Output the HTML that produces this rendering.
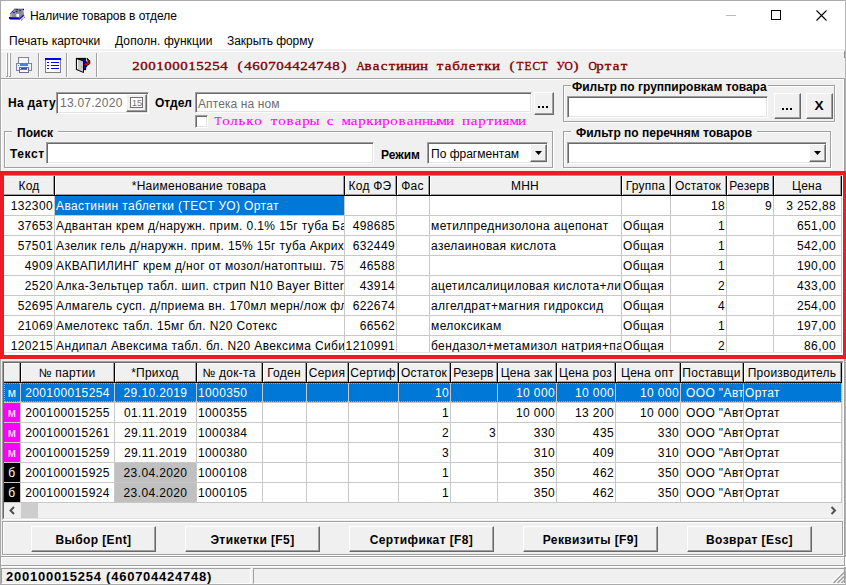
<!DOCTYPE html><html><head><meta charset="utf-8"><style>
*{margin:0;padding:0;box-sizing:border-box}
html,body{width:846px;height:585px;overflow:hidden;background:#f0f0f0;font-family:"Liberation Sans",sans-serif;font-size:12px;color:#000}
.abs{position:absolute}
.t{position:absolute;white-space:nowrap;line-height:1}
.b{font-weight:bold}
.sunk{position:absolute;background:#fff;border-top:1px solid #a0a0a0;border-left:1px solid #a0a0a0;border-right:1px solid #fff;border-bottom:1px solid #fff;box-shadow:inset 1px 1px 0 #696969, inset -1px -1px 0 #e3e3e3}
.btn{position:absolute;background:#f0f0f0;border-top:1px solid #fff;border-left:1px solid #fff;border-right:1px solid #696969;border-bottom:1px solid #696969;box-shadow:inset -1px -1px 0 #a0a0a0}
.grp{position:absolute;border-top:1px solid #a0a0a0;border-left:1px solid #a0a0a0;border-right:1px solid #fff;border-bottom:1px solid #fff;box-shadow:inset 1px 1px 0 #fff, inset -1px -1px 0 #a0a0a0}
.cap{position:absolute;background:#f0f0f0;padding:0 2px;font-weight:bold;white-space:nowrap;line-height:1}
.hl{position:absolute;height:1px}
.vl{position:absolute;width:1px}
.mono{font-family:"Liberation Serif",serif;font-size:13px;-webkit-text-stroke:0.35px currentColor}
.mono i{font-style:normal;display:inline-block;width:8px;text-align:center;transform:scaleX(1.15)}
.mono i.u{transform:scaleX(0.88)}
</style></head><body>
<div class="abs" style="left:1px;top:1px;width:844px;height:48px;background:#fff"></div>
<div class="abs" style="left:0;top:0;width:846px;height:1px;background:#aaa"></div>
<div class="abs" style="left:0;top:0;width:1px;height:585px;background:#aaa"></div>
<div class="abs" style="left:845px;top:0;width:1px;height:585px;background:#b4b4b4"></div>
<svg class="abs" style="left:6px;top:4px" width="22" height="22" viewBox="0 0 22 22">
<path d="M8.5 5 L17.5 5.2 L18 12 L14 15.5 L4 15 L4 9.5 Z" fill="#8e8e8e"/>
<path d="M4.5 9.5 L8.5 5 L17.5 5.2" stroke="#000" stroke-width="0.9" stroke-dasharray="1.1 0.9" fill="none"/>
<rect x="4.5" y="10" width="1" height="3.5" fill="#d0d0d0"/>
<path d="M10.3 10 L13 10 L13 12.8 L10.3 12.8 Z" fill="#fff"/>
<path d="M9.5 11.5 L10.5 10.8 L10.5 12.5 Z" fill="#c0c0c0"/>
<path d="M3 13.2 L12.5 13.5 L14 15.6 L4 15.6 Z" fill="#0000b0"/>
<path d="M3 13 L4.2 13 L4.2 15 L3 14.5 Z" fill="#000"/>
<path d="M13.5 14.8 L18 11" stroke="#2020d0" stroke-width="1.6"/>
<path d="M15 16.5 L19 12.8" stroke="#000" stroke-width="1" stroke-dasharray="1 1"/>
<ellipse cx="11" cy="5.6" rx="1.1" ry="0.6" fill="#0000e0"/>
<ellipse cx="14" cy="6.6" rx="1.1" ry="0.6" fill="#0000e0"/>
<ellipse cx="10.6" cy="7.6" rx="1.1" ry="0.6" fill="#0000e0"/>
<ellipse cx="7.8" cy="8.5" rx="1.1" ry="0.6" fill="#0000e0"/>
<circle cx="17.4" cy="5.4" r="0.6" fill="#000"/>
</svg>
<div class="t" style="left:30px;top:10px;letter-spacing:-0.06px">Наличие товаров в отделе</div>
<div class="abs" style="left:726px;top:15px;width:10px;height:1px;background:#bbb"></div>
<div class="abs" style="left:771px;top:10px;width:10px;height:10px;border:1px solid #000"></div>
<svg class="abs" style="left:816px;top:10px" width="11" height="11" viewBox="0 0 11 11"><path d="M0.5 0.5 L10.5 10.5 M10.5 0.5 L0.5 10.5" stroke="#000" stroke-width="1.1"/></svg>
<div class="t" style="left:9px;top:35px">Печать карточки</div>
<div class="t" style="left:115px;top:35px;letter-spacing:0.1px">Дополн. функции</div>
<div class="t" style="left:227px;top:35px;letter-spacing:-0.05px">Закрыть форму</div>
<div class="abs" style="left:1px;top:51px;width:844px;height:1px;background:#fff"></div>
<div class="abs" style="left:1px;top:78px;width:844px;height:1px;background:#a0a0a0"></div>
<div class="abs" style="left:1px;top:79px;width:844px;height:1px;background:#fff"></div>
<div class="abs" style="left:844px;top:51px;width:1px;height:7px;background:#909090"></div>
<div class="abs" style="left:6px;top:53px;width:1px;height:23px;background:#fff"></div>
<div class="abs" style="left:7px;top:53px;width:1px;height:24px;background:#a0a0a0"></div>
<div class="abs" style="left:6px;top:76px;width:1px;height:1px;background:#a0a0a0"></div>
<div class="abs" style="left:9px;top:53px;width:1px;height:23px;background:#fff"></div>
<div class="abs" style="left:10px;top:53px;width:1px;height:24px;background:#a0a0a0"></div>
<div class="abs" style="left:9px;top:76px;width:1px;height:1px;background:#a0a0a0"></div>
<div class="abs" style="left:38px;top:53px;width:1px;height:24px;background:#a0a0a0"></div>
<div class="abs" style="left:39px;top:53px;width:1px;height:24px;background:#fff"></div>
<div class="abs" style="left:66px;top:53px;width:1px;height:24px;background:#a0a0a0"></div>
<div class="abs" style="left:67px;top:53px;width:1px;height:24px;background:#fff"></div>
<div class="abs" style="left:96px;top:53px;width:1px;height:24px;background:#a0a0a0"></div>
<div class="abs" style="left:97px;top:53px;width:1px;height:24px;background:#fff"></div>
<svg class="abs" style="left:12px;top:54px" width="22" height="22" viewBox="0 0 22 22" shape-rendering="crispEdges">
<rect x="6.5" y="3.5" width="10" height="6" fill="#f4f8ff" stroke="#8080a8"/>
<rect x="4.5" y="9.5" width="15" height="7" fill="#f0f2fa" stroke="#8080a8"/>
<rect x="8" y="9" width="8" height="3" fill="#2a8cf0"/>
<rect x="6" y="11" width="1" height="1" fill="#40b040"/>
<rect x="7.5" y="13.5" width="9" height="5" fill="#f8f8ff" stroke="#6a6a90"/>
<rect x="9" y="14" width="6" height="1" fill="#3050c0"/>
<rect x="8" y="15" width="7" height="1" fill="#30a050"/>
</svg>
<svg class="abs" style="left:45px;top:58px" width="16" height="15" viewBox="0 0 16 15" shape-rendering="crispEdges">
<rect x="0.5" y="0.5" width="15" height="14" fill="#fff" stroke="#808080"/>
<rect x="0" y="0" width="16" height="2" fill="#0000f0"/>
<rect x="2" y="4" width="2" height="1" fill="#0000f0"/><rect x="6" y="4" width="8" height="1" fill="#0000f0"/>
<rect x="2" y="7" width="2" height="1" fill="#0000f0"/><rect x="6" y="7" width="8" height="1" fill="#0000f0"/>
<rect x="2" y="10" width="2" height="1" fill="#0000f0"/><rect x="6" y="10" width="8" height="1" fill="#0000f0"/>
</svg>
<svg class="abs" style="left:72px;top:54px" width="22" height="22" viewBox="0 0 22 22">
<rect x="4.5" y="4.5" width="9" height="11" fill="#0000f0" stroke="#000" stroke-width="1.2"/>
<path d="M4.5 4.5 L11.5 7 L11.5 18.5 L4.5 15.5 Z" fill="#c8c8c8" stroke="#000" stroke-width="1"/>
<path d="M5.5 6 L5.5 15" stroke="#fff" stroke-width="1"/>
<rect x="9" y="12" width="1.5" height="1.5" fill="#c0c000"/>
<path d="M15 4.2 L17.8 6.8 L17.8 9.6 L15.8 11.2 L14.6 11.2 L14.6 13 L11.6 10.3 L14.6 7.6 L14.6 9.2 L15.4 9.2 L16.2 8 L15.8 6.4 Z" fill="#f00000" stroke="#000" stroke-width="0.9" stroke-linejoin="round"/>
</svg>
<div class="t mono" style="left:132px;top:59px;color:#800000"><i>2</i><i>0</i><i>0</i><i>1</i><i>0</i><i>0</i><i>0</i><i>1</i><i>5</i><i>2</i><i>5</i><i>4</i><i>&nbsp;</i><i>(</i><i>4</i><i>6</i><i>0</i><i>7</i><i>0</i><i>4</i><i>4</i><i>2</i><i>4</i><i>7</i><i>4</i><i>8</i><i>)</i><i>&nbsp;</i><i class="u">А</i><i>в</i><i>а</i><i>с</i><i>т</i><i>и</i><i>н</i><i>и</i><i>н</i><i>&nbsp;</i><i>т</i><i>а</i><i>б</i><i>л</i><i>е</i><i>т</i><i>к</i><i>и</i><i>&nbsp;</i><i>(</i><i class="u">Т</i><i class="u">Е</i><i class="u">С</i><i class="u">Т</i><i>&nbsp;</i><i class="u">У</i><i class="u">О</i><i>)</i><i>&nbsp;</i><i class="u">О</i><i>р</i><i>т</i><i>а</i><i>т</i></div>
<div class="t b" style="left:8px;top:97px;letter-spacing:0.3px">На дату</div>
<div class="sunk" style="left:56px;top:92px;width:93px;height:22px"></div>
<div class="t" style="left:60px;top:97px;color:#6d6d6d;letter-spacing:0.25px">13.07.2020</div>
<div class="btn" style="left:126px;top:94px;width:21px;height:18px"></div>
<div class="abs" style="left:130px;top:97px;width:13px;height:11px;border:1px solid #707070;background:#fff"></div>
<div class="t" style="left:132px;top:99px;font-size:9px;color:#707070">15</div>
<div class="t b" style="left:155px;top:97px">Отдел</div>
<div class="sunk" style="left:195px;top:92px;width:337px;height:21px"></div>
<div class="t" style="left:198px;top:98px;color:#6d6d6d;letter-spacing:0.1px">Аптека на ном</div>
<div class="btn" style="left:534px;top:92px;width:20px;height:23px"></div>
<div class="abs" style="left:538px;top:106px;width:2px;height:2px;background:#000"></div><div class="abs" style="left:542px;top:106px;width:2px;height:2px;background:#000"></div><div class="abs" style="left:546px;top:106px;width:2px;height:2px;background:#000"></div>
<div class="sunk" style="left:195px;top:115px;width:13px;height:13px"></div>
<div class="t mono" style="left:214px;top:114px;color:#ff00ff;-webkit-text-stroke:0.1px #ff00ff"><i class="u">Т</i><i>о</i><i>л</i><i>ь</i><i>к</i><i>о</i><i>&nbsp;</i><i>т</i><i>о</i><i>в</i><i>а</i><i>р</i><i>ы</i><i>&nbsp;</i><i>с</i><i>&nbsp;</i><i>м</i><i>а</i><i>р</i><i>к</i><i>и</i><i>р</i><i>о</i><i>в</i><i>а</i><i>н</i><i>н</i><i>ы</i><i>м</i><i>и</i><i>&nbsp;</i><i>п</i><i>а</i><i>р</i><i>т</i><i>и</i><i>я</i><i>м</i><i>и</i></div>
<div class="abs" style="left:5px;top:132px;width:549px;height:37px;border:1px solid #fff"></div>
<div class="abs" style="left:4px;top:131px;width:549px;height:37px;border:1px solid #a0a0a0"></div>
<div class="cap" style="left:12px;top:127px;padding:0 5px 0 5px">Поиск</div>
<div class="t b" style="left:10px;top:148px;letter-spacing:0.6px">Текст</div>
<div class="sunk" style="left:46px;top:142px;width:328px;height:22px"></div>
<div class="t b" style="left:381px;top:149px">Режим</div>
<div class="sunk" style="left:427px;top:142px;width:121px;height:22px"></div>
<div class="t" style="left:431px;top:148px">По фрагментам</div>
<div class="btn" style="left:530px;top:144px;width:17px;height:18px"></div>
<svg class="abs" style="left:535px;top:151px" width="8" height="4"><path d="M0 0 L7 0 L3.5 4 Z" fill="#000"/></svg>
<div class="abs" style="left:564px;top:86px;width:272px;height:37px;border:1px solid #fff"></div>
<div class="abs" style="left:563px;top:85px;width:272px;height:37px;border:1px solid #a0a0a0"></div>
<div class="cap" style="left:571px;top:81px;padding:0 1px">Фильтр по группировкам товара</div>
<div class="sunk" style="left:567px;top:96px;width:201px;height:22px"></div>
<div class="btn" style="left:774px;top:93px;width:27px;height:26px"></div>
<div class="abs" style="left:782px;top:108px;width:2px;height:2px;background:#000"></div><div class="abs" style="left:786px;top:108px;width:2px;height:2px;background:#000"></div><div class="abs" style="left:790px;top:108px;width:2px;height:2px;background:#000"></div>
<div class="btn" style="left:806px;top:93px;width:27px;height:26px"></div>
<div class="t b" style="left:814.5px;top:99px;font-size:13.6px">X</div>
<div class="abs" style="left:564px;top:132px;width:268px;height:37px;border:1px solid #fff"></div>
<div class="abs" style="left:563px;top:131px;width:268px;height:37px;border:1px solid #a0a0a0"></div>
<div class="cap" style="left:571px;top:127px;padding:0 5px 0 5px">Фильтр по перечням товаров</div>
<div class="sunk" style="left:567px;top:142px;width:260px;height:22px"></div>
<div class="btn" style="left:809px;top:144px;width:17px;height:18px"></div>
<svg class="abs" style="left:814px;top:151px" width="8" height="4"><path d="M0 0 L7 0 L3.5 4 Z" fill="#000"/></svg>
<div class="abs" style="left:844px;top:78px;width:1px;height:506px;background:#a0a0a0"></div>
<div class="abs" style="left:843px;top:79px;width:1px;height:92px;background:#fff"></div>
<div class="abs" style="left:1px;top:79px;width:1px;height:92px;background:#fff"></div>
<div class="abs" style="left:0;top:171px;width:846px;height:4px;background:#ed1c24"></div>
<div class="abs" style="left:0;top:355px;width:846px;height:4px;background:#ed1c24"></div>
<div class="abs" style="left:0;top:171px;width:4px;height:188px;background:#ed1c24"></div>
<div class="abs" style="left:843px;top:171px;width:3px;height:188px;background:#ed1c24"></div>
<div class="abs" style="left:4px;top:175px;width:839px;height:180px;background:#fff;overflow:hidden">
<div class="abs" style="left:0;top:0;width:838px;height:1px;background:#a0a0a0"></div>
<div class="abs" style="left:0;top:1px;width:838px;height:19px;background:#f0f0f0"></div>
<div class="abs" style="left:0;top:1px;width:838px;height:1px;background:#fff"></div>
<div class="abs" style="left:0;top:19px;width:838px;height:1px;background:#a0a0a0"></div>
<div class="abs" style="left:0;top:20px;width:838px;height:1px;background:#000"></div>
<div class="t" style="left:0px;width:50px;top:5px;text-align:center;letter-spacing:0.25px">Код</div>
<div class="abs" style="left:50px;top:1px;width:1px;height:19px;background:#000"></div>
<div class="abs" style="left:51px;top:1px;width:1px;height:19px;background:#fff"></div>
<div class="abs" style="left:49px;top:1px;width:1px;height:19px;background:#a0a0a0"></div>
<div class="t" style="left:50px;width:290px;top:5px;text-align:center;letter-spacing:0.25px">*Наименование товара</div>
<div class="abs" style="left:340px;top:1px;width:1px;height:19px;background:#000"></div>
<div class="abs" style="left:341px;top:1px;width:1px;height:19px;background:#fff"></div>
<div class="abs" style="left:339px;top:1px;width:1px;height:19px;background:#a0a0a0"></div>
<div class="t" style="left:340px;width:52px;top:5px;text-align:center;letter-spacing:0.25px">Код ФЭ</div>
<div class="abs" style="left:392px;top:1px;width:1px;height:19px;background:#000"></div>
<div class="abs" style="left:393px;top:1px;width:1px;height:19px;background:#fff"></div>
<div class="abs" style="left:391px;top:1px;width:1px;height:19px;background:#a0a0a0"></div>
<div class="t" style="left:392px;width:33px;top:5px;text-align:center;letter-spacing:0.25px">Фас</div>
<div class="abs" style="left:425px;top:1px;width:1px;height:19px;background:#000"></div>
<div class="abs" style="left:426px;top:1px;width:1px;height:19px;background:#fff"></div>
<div class="abs" style="left:424px;top:1px;width:1px;height:19px;background:#a0a0a0"></div>
<div class="t" style="left:425px;width:192px;top:5px;text-align:center;letter-spacing:0.25px">МНН</div>
<div class="abs" style="left:617px;top:1px;width:1px;height:19px;background:#000"></div>
<div class="abs" style="left:618px;top:1px;width:1px;height:19px;background:#fff"></div>
<div class="abs" style="left:616px;top:1px;width:1px;height:19px;background:#a0a0a0"></div>
<div class="t" style="left:617px;width:49px;top:5px;text-align:center;letter-spacing:0.25px">Группа</div>
<div class="abs" style="left:666px;top:1px;width:1px;height:19px;background:#000"></div>
<div class="abs" style="left:667px;top:1px;width:1px;height:19px;background:#fff"></div>
<div class="abs" style="left:665px;top:1px;width:1px;height:19px;background:#a0a0a0"></div>
<div class="t" style="left:666px;width:56px;top:5px;text-align:center;letter-spacing:0.25px">Остаток</div>
<div class="abs" style="left:722px;top:1px;width:1px;height:19px;background:#000"></div>
<div class="abs" style="left:723px;top:1px;width:1px;height:19px;background:#fff"></div>
<div class="abs" style="left:721px;top:1px;width:1px;height:19px;background:#a0a0a0"></div>
<div class="t" style="left:722px;width:47px;top:5px;text-align:center;letter-spacing:0.25px">Резерв</div>
<div class="abs" style="left:769px;top:1px;width:1px;height:19px;background:#000"></div>
<div class="abs" style="left:770px;top:1px;width:1px;height:19px;background:#fff"></div>
<div class="abs" style="left:768px;top:1px;width:1px;height:19px;background:#a0a0a0"></div>
<div class="t" style="left:769px;width:68px;top:5px;text-align:center;letter-spacing:0.25px">Цена</div>
<div class="abs" style="left:837px;top:1px;width:1px;height:20px;background:#000"></div>
<div class="abs" style="left:836px;top:1px;width:1px;height:19px;background:#a0a0a0"></div>
<div class="abs" style="left:0;top:40px;width:838px;height:1px;background:#c8c8c8"></div>
<div class="t" style="left:0px;top:21px;width:50px;height:19px;line-height:21px;overflow:hidden;color:#000;text-align:right;padding-right:1px;letter-spacing:0.38px">132300</div>
<div class="t" style="left:51px;top:21px;width:289px;height:19px;line-height:21px;overflow:hidden;background:#0078d7;color:#fff;padding-left:1px;letter-spacing:0.38px">Авастинин таблетки (ТЕСТ УО) Ортат</div>
<div class="t" style="left:341px;top:21px;width:51px;height:19px;line-height:21px;overflow:hidden;color:#000;text-align:right;padding-right:1px;letter-spacing:0.38px"></div>
<div class="t" style="left:393px;top:21px;width:32px;height:19px;line-height:21px;overflow:hidden;color:#000;padding-left:1px;letter-spacing:0.38px"></div>
<div class="t" style="left:426px;top:21px;width:191px;height:19px;line-height:21px;overflow:hidden;color:#000;padding-left:1px;letter-spacing:0.38px"></div>
<div class="t" style="left:618px;top:21px;width:48px;height:19px;line-height:21px;overflow:hidden;color:#000;padding-left:1px;letter-spacing:0.38px"></div>
<div class="t" style="left:667px;top:21px;width:55px;height:19px;line-height:21px;overflow:hidden;color:#000;text-align:right;padding-right:1px;letter-spacing:0.38px">18</div>
<div class="t" style="left:723px;top:21px;width:46px;height:19px;line-height:21px;overflow:hidden;color:#000;text-align:right;padding-right:1px;letter-spacing:0.38px">9</div>
<div class="t" style="left:770px;top:21px;width:67px;height:19px;line-height:21px;overflow:hidden;color:#000;text-align:right;padding-right:5px;letter-spacing:0.38px">3 252,88</div>
<div class="abs" style="left:0;top:60px;width:838px;height:1px;background:#c8c8c8"></div>
<div class="t" style="left:0px;top:41px;width:50px;height:19px;line-height:21px;overflow:hidden;color:#000;text-align:right;padding-right:1px;letter-spacing:0.38px">37653</div>
<div class="t" style="left:51px;top:41px;width:289px;height:19px;line-height:21px;overflow:hidden;color:#000;padding-left:1px;letter-spacing:0.38px">Адвантан крем д/наружн. прим. 0.1% 15г туба Байер</div>
<div class="t" style="left:341px;top:41px;width:51px;height:19px;line-height:21px;overflow:hidden;color:#000;text-align:right;padding-right:1px;letter-spacing:0.38px">498685</div>
<div class="t" style="left:393px;top:41px;width:32px;height:19px;line-height:21px;overflow:hidden;color:#000;padding-left:1px;letter-spacing:0.38px"></div>
<div class="t" style="left:426px;top:41px;width:191px;height:19px;line-height:21px;overflow:hidden;color:#000;padding-left:1px;letter-spacing:0.38px">метилпреднизолона ацепонат</div>
<div class="t" style="left:618px;top:41px;width:48px;height:19px;line-height:21px;overflow:hidden;color:#000;padding-left:1px;letter-spacing:0.38px">Общая</div>
<div class="t" style="left:667px;top:41px;width:55px;height:19px;line-height:21px;overflow:hidden;color:#000;text-align:right;padding-right:1px;letter-spacing:0.38px">1</div>
<div class="t" style="left:723px;top:41px;width:46px;height:19px;line-height:21px;overflow:hidden;color:#000;text-align:right;padding-right:1px;letter-spacing:0.38px"></div>
<div class="t" style="left:770px;top:41px;width:67px;height:19px;line-height:21px;overflow:hidden;color:#000;text-align:right;padding-right:5px;letter-spacing:0.38px">651,00</div>
<div class="abs" style="left:0;top:80px;width:838px;height:1px;background:#c8c8c8"></div>
<div class="t" style="left:0px;top:61px;width:50px;height:19px;line-height:21px;overflow:hidden;color:#000;text-align:right;padding-right:1px;letter-spacing:0.38px">57501</div>
<div class="t" style="left:51px;top:61px;width:289px;height:19px;line-height:21px;overflow:hidden;color:#000;padding-left:1px;letter-spacing:0.38px">Азелик гель д/наружн. прим. 15% 15г туба Акрихин</div>
<div class="t" style="left:341px;top:61px;width:51px;height:19px;line-height:21px;overflow:hidden;color:#000;text-align:right;padding-right:1px;letter-spacing:0.38px">632449</div>
<div class="t" style="left:393px;top:61px;width:32px;height:19px;line-height:21px;overflow:hidden;color:#000;padding-left:1px;letter-spacing:0.38px"></div>
<div class="t" style="left:426px;top:61px;width:191px;height:19px;line-height:21px;overflow:hidden;color:#000;padding-left:1px;letter-spacing:0.38px">азелаиновая кислота</div>
<div class="t" style="left:618px;top:61px;width:48px;height:19px;line-height:21px;overflow:hidden;color:#000;padding-left:1px;letter-spacing:0.38px">Общая</div>
<div class="t" style="left:667px;top:61px;width:55px;height:19px;line-height:21px;overflow:hidden;color:#000;text-align:right;padding-right:1px;letter-spacing:0.38px">1</div>
<div class="t" style="left:723px;top:61px;width:46px;height:19px;line-height:21px;overflow:hidden;color:#000;text-align:right;padding-right:1px;letter-spacing:0.38px"></div>
<div class="t" style="left:770px;top:61px;width:67px;height:19px;line-height:21px;overflow:hidden;color:#000;text-align:right;padding-right:5px;letter-spacing:0.38px">542,00</div>
<div class="abs" style="left:0;top:100px;width:838px;height:1px;background:#c8c8c8"></div>
<div class="t" style="left:0px;top:81px;width:50px;height:19px;line-height:21px;overflow:hidden;color:#000;text-align:right;padding-right:1px;letter-spacing:0.38px">4909</div>
<div class="t" style="left:51px;top:81px;width:289px;height:19px;line-height:21px;overflow:hidden;color:#000;padding-left:1px;letter-spacing:0.38px">АКВАПИЛИНГ крем д/ног от мозол/натоптыш. 75мл</div>
<div class="t" style="left:341px;top:81px;width:51px;height:19px;line-height:21px;overflow:hidden;color:#000;text-align:right;padding-right:1px;letter-spacing:0.38px">46588</div>
<div class="t" style="left:393px;top:81px;width:32px;height:19px;line-height:21px;overflow:hidden;color:#000;padding-left:1px;letter-spacing:0.38px"></div>
<div class="t" style="left:426px;top:81px;width:191px;height:19px;line-height:21px;overflow:hidden;color:#000;padding-left:1px;letter-spacing:0.38px"></div>
<div class="t" style="left:618px;top:81px;width:48px;height:19px;line-height:21px;overflow:hidden;color:#000;padding-left:1px;letter-spacing:0.38px">Общая</div>
<div class="t" style="left:667px;top:81px;width:55px;height:19px;line-height:21px;overflow:hidden;color:#000;text-align:right;padding-right:1px;letter-spacing:0.38px">1</div>
<div class="t" style="left:723px;top:81px;width:46px;height:19px;line-height:21px;overflow:hidden;color:#000;text-align:right;padding-right:1px;letter-spacing:0.38px"></div>
<div class="t" style="left:770px;top:81px;width:67px;height:19px;line-height:21px;overflow:hidden;color:#000;text-align:right;padding-right:5px;letter-spacing:0.38px">190,00</div>
<div class="abs" style="left:0;top:120px;width:838px;height:1px;background:#c8c8c8"></div>
<div class="t" style="left:0px;top:101px;width:50px;height:19px;line-height:21px;overflow:hidden;color:#000;text-align:right;padding-right:1px;letter-spacing:0.38px">2520</div>
<div class="t" style="left:51px;top:101px;width:289px;height:19px;line-height:21px;overflow:hidden;color:#000;padding-left:1px;letter-spacing:0.38px">Алка-Зельтцер табл. шип. стрип N10 Bayer Bitterfeld</div>
<div class="t" style="left:341px;top:101px;width:51px;height:19px;line-height:21px;overflow:hidden;color:#000;text-align:right;padding-right:1px;letter-spacing:0.38px">43914</div>
<div class="t" style="left:393px;top:101px;width:32px;height:19px;line-height:21px;overflow:hidden;color:#000;padding-left:1px;letter-spacing:0.38px"></div>
<div class="t" style="left:426px;top:101px;width:191px;height:19px;line-height:21px;overflow:hidden;color:#000;padding-left:1px;letter-spacing:0.38px">ацетилсалициловая кислота+лимонная</div>
<div class="t" style="left:618px;top:101px;width:48px;height:19px;line-height:21px;overflow:hidden;color:#000;padding-left:1px;letter-spacing:0.38px">Общая</div>
<div class="t" style="left:667px;top:101px;width:55px;height:19px;line-height:21px;overflow:hidden;color:#000;text-align:right;padding-right:1px;letter-spacing:0.38px">2</div>
<div class="t" style="left:723px;top:101px;width:46px;height:19px;line-height:21px;overflow:hidden;color:#000;text-align:right;padding-right:1px;letter-spacing:0.38px"></div>
<div class="t" style="left:770px;top:101px;width:67px;height:19px;line-height:21px;overflow:hidden;color:#000;text-align:right;padding-right:5px;letter-spacing:0.38px">433,00</div>
<div class="abs" style="left:0;top:140px;width:838px;height:1px;background:#c8c8c8"></div>
<div class="t" style="left:0px;top:121px;width:50px;height:19px;line-height:21px;overflow:hidden;color:#000;text-align:right;padding-right:1px;letter-spacing:0.38px">52695</div>
<div class="t" style="left:51px;top:121px;width:289px;height:19px;line-height:21px;overflow:hidden;color:#000;padding-left:1px;letter-spacing:0.38px">Алмагель сусп. д/приема вн. 170мл мерн/лож фл.</div>
<div class="t" style="left:341px;top:121px;width:51px;height:19px;line-height:21px;overflow:hidden;color:#000;text-align:right;padding-right:1px;letter-spacing:0.38px">622674</div>
<div class="t" style="left:393px;top:121px;width:32px;height:19px;line-height:21px;overflow:hidden;color:#000;padding-left:1px;letter-spacing:0.38px"></div>
<div class="t" style="left:426px;top:121px;width:191px;height:19px;line-height:21px;overflow:hidden;color:#000;padding-left:1px;letter-spacing:0.38px">алгелдрат+магния гидроксид</div>
<div class="t" style="left:618px;top:121px;width:48px;height:19px;line-height:21px;overflow:hidden;color:#000;padding-left:1px;letter-spacing:0.38px">Общая</div>
<div class="t" style="left:667px;top:121px;width:55px;height:19px;line-height:21px;overflow:hidden;color:#000;text-align:right;padding-right:1px;letter-spacing:0.38px">4</div>
<div class="t" style="left:723px;top:121px;width:46px;height:19px;line-height:21px;overflow:hidden;color:#000;text-align:right;padding-right:1px;letter-spacing:0.38px"></div>
<div class="t" style="left:770px;top:121px;width:67px;height:19px;line-height:21px;overflow:hidden;color:#000;text-align:right;padding-right:5px;letter-spacing:0.38px">254,00</div>
<div class="abs" style="left:0;top:160px;width:838px;height:1px;background:#c8c8c8"></div>
<div class="t" style="left:0px;top:141px;width:50px;height:19px;line-height:21px;overflow:hidden;color:#000;text-align:right;padding-right:1px;letter-spacing:0.38px">21069</div>
<div class="t" style="left:51px;top:141px;width:289px;height:19px;line-height:21px;overflow:hidden;color:#000;padding-left:1px;letter-spacing:0.38px">Амелотекс табл. 15мг бл. N20 Сотекс</div>
<div class="t" style="left:341px;top:141px;width:51px;height:19px;line-height:21px;overflow:hidden;color:#000;text-align:right;padding-right:1px;letter-spacing:0.38px">66562</div>
<div class="t" style="left:393px;top:141px;width:32px;height:19px;line-height:21px;overflow:hidden;color:#000;padding-left:1px;letter-spacing:0.38px"></div>
<div class="t" style="left:426px;top:141px;width:191px;height:19px;line-height:21px;overflow:hidden;color:#000;padding-left:1px;letter-spacing:0.38px">мелоксикам</div>
<div class="t" style="left:618px;top:141px;width:48px;height:19px;line-height:21px;overflow:hidden;color:#000;padding-left:1px;letter-spacing:0.38px">Общая</div>
<div class="t" style="left:667px;top:141px;width:55px;height:19px;line-height:21px;overflow:hidden;color:#000;text-align:right;padding-right:1px;letter-spacing:0.38px">1</div>
<div class="t" style="left:723px;top:141px;width:46px;height:19px;line-height:21px;overflow:hidden;color:#000;text-align:right;padding-right:1px;letter-spacing:0.38px"></div>
<div class="t" style="left:770px;top:141px;width:67px;height:19px;line-height:21px;overflow:hidden;color:#000;text-align:right;padding-right:5px;letter-spacing:0.38px">197,00</div>
<div class="abs" style="left:0;top:180px;width:838px;height:1px;background:#c8c8c8"></div>
<div class="t" style="left:0px;top:161px;width:50px;height:19px;line-height:21px;overflow:hidden;color:#000;text-align:right;padding-right:1px;letter-spacing:0.38px">120215</div>
<div class="t" style="left:51px;top:161px;width:289px;height:19px;line-height:21px;overflow:hidden;color:#000;padding-left:1px;letter-spacing:0.38px">Андипал Авексима табл. бл. N20 Авексима Сибирь</div>
<div class="t" style="left:341px;top:161px;width:51px;height:19px;line-height:21px;overflow:hidden;color:#000;text-align:right;padding-right:1px;letter-spacing:0.38px">1210991</div>
<div class="t" style="left:393px;top:161px;width:32px;height:19px;line-height:21px;overflow:hidden;color:#000;padding-left:1px;letter-spacing:0.38px"></div>
<div class="t" style="left:426px;top:161px;width:191px;height:19px;line-height:21px;overflow:hidden;color:#000;padding-left:1px;letter-spacing:0.38px">бендазол+метамизол натрия+парацетамол</div>
<div class="t" style="left:618px;top:161px;width:48px;height:19px;line-height:21px;overflow:hidden;color:#000;padding-left:1px;letter-spacing:0.38px">Общая</div>
<div class="t" style="left:667px;top:161px;width:55px;height:19px;line-height:21px;overflow:hidden;color:#000;text-align:right;padding-right:1px;letter-spacing:0.38px">2</div>
<div class="t" style="left:723px;top:161px;width:46px;height:19px;line-height:21px;overflow:hidden;color:#000;text-align:right;padding-right:1px;letter-spacing:0.38px"></div>
<div class="t" style="left:770px;top:161px;width:67px;height:19px;line-height:21px;overflow:hidden;color:#000;text-align:right;padding-right:5px;letter-spacing:0.38px">86,00</div>
<div class="abs" style="left:50px;top:21px;width:1px;height:156px;background:#c8c8c8"></div>
<div class="abs" style="left:340px;top:21px;width:1px;height:156px;background:#c8c8c8"></div>
<div class="abs" style="left:392px;top:21px;width:1px;height:156px;background:#c8c8c8"></div>
<div class="abs" style="left:425px;top:21px;width:1px;height:156px;background:#c8c8c8"></div>
<div class="abs" style="left:617px;top:21px;width:1px;height:156px;background:#c8c8c8"></div>
<div class="abs" style="left:666px;top:21px;width:1px;height:156px;background:#c8c8c8"></div>
<div class="abs" style="left:722px;top:21px;width:1px;height:156px;background:#c8c8c8"></div>
<div class="abs" style="left:769px;top:21px;width:1px;height:156px;background:#c8c8c8"></div>
<div class="abs" style="left:837px;top:21px;width:1px;height:156px;background:#c8c8c8"></div>
<div class="abs" style="left:0;top:177px;width:838px;height:1px;background:#e3e3e3"></div>
</div>
<div class="abs" style="left:2px;top:361px;width:842px;height:159px;border-top:1px solid #a0a0a0;border-left:1px solid #a0a0a0;border-right:1px solid #fff;border-bottom:1px solid #fff"></div>
<div class="abs" style="left:3px;top:362px;width:840px;height:157px;border-top:1px solid #696969;border-left:1px solid #696969;border-right:1px solid #e3e3e3;border-bottom:1px solid #e3e3e3;background:#fff;overflow:hidden">
<div class="abs" style="left:0;top:0;width:838px;height:19px;background:#f0f0f0"></div>
<div class="abs" style="left:0;top:0;width:838px;height:1px;background:#fff"></div>
<div class="abs" style="left:0;top:18px;width:838px;height:1px;background:#a0a0a0"></div>
<div class="abs" style="left:0;top:19px;width:838px;height:1px;background:#000"></div>
<div class="t" style="left:0px;width:16px;top:4px;text-align:center;letter-spacing:0.25px"></div>
<div class="abs" style="left:16px;top:0;width:1px;height:19px;background:#000"></div>
<div class="abs" style="left:17px;top:0;width:1px;height:19px;background:#fff"></div>
<div class="abs" style="left:15px;top:0;width:1px;height:19px;background:#a0a0a0"></div>
<div class="t" style="left:16px;width:94px;top:4px;text-align:center;letter-spacing:0.25px">№ партии</div>
<div class="abs" style="left:110px;top:0;width:1px;height:19px;background:#000"></div>
<div class="abs" style="left:111px;top:0;width:1px;height:19px;background:#fff"></div>
<div class="abs" style="left:109px;top:0;width:1px;height:19px;background:#a0a0a0"></div>
<div class="t" style="left:110px;width:82px;top:4px;text-align:center;letter-spacing:0.25px">*Приход</div>
<div class="abs" style="left:192px;top:0;width:1px;height:19px;background:#000"></div>
<div class="abs" style="left:193px;top:0;width:1px;height:19px;background:#fff"></div>
<div class="abs" style="left:191px;top:0;width:1px;height:19px;background:#a0a0a0"></div>
<div class="t" style="left:192px;width:66px;top:4px;text-align:center;letter-spacing:0.25px">№ док-та</div>
<div class="abs" style="left:258px;top:0;width:1px;height:19px;background:#000"></div>
<div class="abs" style="left:259px;top:0;width:1px;height:19px;background:#fff"></div>
<div class="abs" style="left:257px;top:0;width:1px;height:19px;background:#a0a0a0"></div>
<div class="t" style="left:258px;width:44px;top:4px;text-align:center;letter-spacing:0.25px">Годен</div>
<div class="abs" style="left:302px;top:0;width:1px;height:19px;background:#000"></div>
<div class="abs" style="left:303px;top:0;width:1px;height:19px;background:#fff"></div>
<div class="abs" style="left:301px;top:0;width:1px;height:19px;background:#a0a0a0"></div>
<div class="t" style="left:302px;width:42px;top:4px;text-align:center;letter-spacing:0.25px">Серия</div>
<div class="abs" style="left:344px;top:0;width:1px;height:19px;background:#000"></div>
<div class="abs" style="left:345px;top:0;width:1px;height:19px;background:#fff"></div>
<div class="abs" style="left:343px;top:0;width:1px;height:19px;background:#a0a0a0"></div>
<div class="t" style="left:344px;width:50px;top:4px;text-align:center;letter-spacing:0.25px">Сертиф</div>
<div class="abs" style="left:394px;top:0;width:1px;height:19px;background:#000"></div>
<div class="abs" style="left:395px;top:0;width:1px;height:19px;background:#fff"></div>
<div class="abs" style="left:393px;top:0;width:1px;height:19px;background:#a0a0a0"></div>
<div class="t" style="left:394px;width:52px;top:4px;text-align:center;letter-spacing:0.25px">Остаток</div>
<div class="abs" style="left:446px;top:0;width:1px;height:19px;background:#000"></div>
<div class="abs" style="left:447px;top:0;width:1px;height:19px;background:#fff"></div>
<div class="abs" style="left:445px;top:0;width:1px;height:19px;background:#a0a0a0"></div>
<div class="t" style="left:446px;width:47px;top:4px;text-align:center;letter-spacing:0.25px">Резерв</div>
<div class="abs" style="left:493px;top:0;width:1px;height:19px;background:#000"></div>
<div class="abs" style="left:494px;top:0;width:1px;height:19px;background:#fff"></div>
<div class="abs" style="left:492px;top:0;width:1px;height:19px;background:#a0a0a0"></div>
<div class="t" style="left:493px;width:59px;top:4px;text-align:center;letter-spacing:0.25px">Цена зак</div>
<div class="abs" style="left:552px;top:0;width:1px;height:19px;background:#000"></div>
<div class="abs" style="left:553px;top:0;width:1px;height:19px;background:#fff"></div>
<div class="abs" style="left:551px;top:0;width:1px;height:19px;background:#a0a0a0"></div>
<div class="t" style="left:552px;width:59px;top:4px;text-align:center;letter-spacing:0.25px">Цена роз</div>
<div class="abs" style="left:611px;top:0;width:1px;height:19px;background:#000"></div>
<div class="abs" style="left:612px;top:0;width:1px;height:19px;background:#fff"></div>
<div class="abs" style="left:610px;top:0;width:1px;height:19px;background:#a0a0a0"></div>
<div class="t" style="left:611px;width:65px;top:4px;text-align:center;letter-spacing:0.25px">Цена опт</div>
<div class="abs" style="left:676px;top:0;width:1px;height:19px;background:#000"></div>
<div class="abs" style="left:677px;top:0;width:1px;height:19px;background:#fff"></div>
<div class="abs" style="left:675px;top:0;width:1px;height:19px;background:#a0a0a0"></div>
<div class="t" style="left:676px;width:63px;top:4px;text-align:center;letter-spacing:0.25px">Поставщи</div>
<div class="abs" style="left:739px;top:0;width:1px;height:19px;background:#000"></div>
<div class="abs" style="left:740px;top:0;width:1px;height:19px;background:#fff"></div>
<div class="abs" style="left:738px;top:0;width:1px;height:19px;background:#a0a0a0"></div>
<div class="t" style="left:739px;width:98px;top:4px;text-align:center;letter-spacing:0.25px">Производитель</div>
<div class="abs" style="left:837px;top:0;width:1px;height:20px;background:#000"></div>
<div class="abs" style="left:836px;top:0;width:1px;height:19px;background:#a0a0a0"></div>
<div class="abs" style="left:0;top:39px;width:838px;height:1px;background:#c8c8c8"></div>
<div class="t" style="left:0px;top:20px;width:16px;height:19px;line-height:21px;overflow:hidden;background:#0078d7;color:#fff;text-align:center;letter-spacing:0.38px">м</div>
<div class="t" style="left:17px;top:20px;width:93px;height:19px;line-height:21px;overflow:hidden;background:#0078d7;color:#fff;text-align:center;letter-spacing:0.38px">200100015254</div>
<div class="t" style="left:111px;top:20px;width:81px;height:19px;line-height:21px;overflow:hidden;background:#0078d7;color:#fff;text-align:center;letter-spacing:0.38px">29.10.2019</div>
<div class="t" style="left:193px;top:20px;width:65px;height:19px;line-height:21px;overflow:hidden;background:#0078d7;color:#fff;padding-left:1px;letter-spacing:0.38px">1000350</div>
<div class="t" style="left:259px;top:20px;width:43px;height:19px;line-height:21px;overflow:hidden;background:#0078d7;color:#fff;padding-left:1px;letter-spacing:0.38px"></div>
<div class="t" style="left:303px;top:20px;width:41px;height:19px;line-height:21px;overflow:hidden;background:#0078d7;color:#fff;padding-left:1px;letter-spacing:0.38px"></div>
<div class="t" style="left:345px;top:20px;width:49px;height:19px;line-height:21px;overflow:hidden;background:#0078d7;color:#fff;padding-left:1px;letter-spacing:0.38px"></div>
<div class="t" style="left:395px;top:20px;width:51px;height:19px;line-height:21px;overflow:hidden;background:#0078d7;color:#fff;text-align:right;padding-right:1px;letter-spacing:0.38px">10</div>
<div class="t" style="left:447px;top:20px;width:46px;height:19px;line-height:21px;overflow:hidden;background:#0078d7;color:#fff;text-align:right;padding-right:1px;letter-spacing:0.38px"></div>
<div class="t" style="left:494px;top:20px;width:58px;height:19px;line-height:21px;overflow:hidden;background:#0078d7;color:#fff;text-align:right;padding-right:1px;letter-spacing:0.38px">10 000</div>
<div class="t" style="left:553px;top:20px;width:58px;height:19px;line-height:21px;overflow:hidden;background:#0078d7;color:#fff;text-align:right;padding-right:1px;letter-spacing:0.38px">10 000</div>
<div class="t" style="left:612px;top:20px;width:64px;height:19px;line-height:21px;overflow:hidden;background:#0078d7;color:#fff;text-align:right;padding-right:1px;letter-spacing:0.38px">10 000</div>
<div class="t" style="left:677px;top:20px;width:62px;height:19px;line-height:21px;overflow:hidden;background:#0078d7;color:#fff;padding-left:5px;letter-spacing:0.38px">ООО "Автомир"</div>
<div class="t" style="left:740px;top:20px;width:97px;height:19px;line-height:21px;overflow:hidden;background:#0078d7;color:#fff;padding-left:1px;letter-spacing:0.38px">Ортат</div>
<div class="abs" style="left:0;top:59px;width:838px;height:1px;background:#c8c8c8"></div>
<div class="t" style="left:0px;top:40px;width:16px;height:19px;line-height:21px;overflow:hidden;background:#ff00ff;color:#fff;text-align:center;letter-spacing:0.38px">м</div>
<div class="t" style="left:17px;top:40px;width:93px;height:19px;line-height:21px;overflow:hidden;color:#000;text-align:center;letter-spacing:0.38px">200100015255</div>
<div class="t" style="left:111px;top:40px;width:81px;height:19px;line-height:21px;overflow:hidden;color:#000;text-align:center;letter-spacing:0.38px">01.11.2019</div>
<div class="t" style="left:193px;top:40px;width:65px;height:19px;line-height:21px;overflow:hidden;color:#000;padding-left:1px;letter-spacing:0.38px">1000355</div>
<div class="t" style="left:259px;top:40px;width:43px;height:19px;line-height:21px;overflow:hidden;color:#000;padding-left:1px;letter-spacing:0.38px"></div>
<div class="t" style="left:303px;top:40px;width:41px;height:19px;line-height:21px;overflow:hidden;color:#000;padding-left:1px;letter-spacing:0.38px"></div>
<div class="t" style="left:345px;top:40px;width:49px;height:19px;line-height:21px;overflow:hidden;color:#000;padding-left:1px;letter-spacing:0.38px"></div>
<div class="t" style="left:395px;top:40px;width:51px;height:19px;line-height:21px;overflow:hidden;color:#000;text-align:right;padding-right:1px;letter-spacing:0.38px">1</div>
<div class="t" style="left:447px;top:40px;width:46px;height:19px;line-height:21px;overflow:hidden;color:#000;text-align:right;padding-right:1px;letter-spacing:0.38px"></div>
<div class="t" style="left:494px;top:40px;width:58px;height:19px;line-height:21px;overflow:hidden;color:#000;text-align:right;padding-right:1px;letter-spacing:0.38px">10 000</div>
<div class="t" style="left:553px;top:40px;width:58px;height:19px;line-height:21px;overflow:hidden;color:#000;text-align:right;padding-right:1px;letter-spacing:0.38px">13 200</div>
<div class="t" style="left:612px;top:40px;width:64px;height:19px;line-height:21px;overflow:hidden;color:#000;text-align:right;padding-right:1px;letter-spacing:0.38px">10 000</div>
<div class="t" style="left:677px;top:40px;width:62px;height:19px;line-height:21px;overflow:hidden;color:#000;padding-left:5px;letter-spacing:0.38px">ООО "Автомир"</div>
<div class="t" style="left:740px;top:40px;width:97px;height:19px;line-height:21px;overflow:hidden;color:#000;padding-left:1px;letter-spacing:0.38px">Ортат</div>
<div class="abs" style="left:0;top:79px;width:838px;height:1px;background:#c8c8c8"></div>
<div class="t" style="left:0px;top:60px;width:16px;height:19px;line-height:21px;overflow:hidden;background:#ff00ff;color:#fff;text-align:center;letter-spacing:0.38px">м</div>
<div class="t" style="left:17px;top:60px;width:93px;height:19px;line-height:21px;overflow:hidden;color:#000;text-align:center;letter-spacing:0.38px">200100015261</div>
<div class="t" style="left:111px;top:60px;width:81px;height:19px;line-height:21px;overflow:hidden;color:#000;text-align:center;letter-spacing:0.38px">29.11.2019</div>
<div class="t" style="left:193px;top:60px;width:65px;height:19px;line-height:21px;overflow:hidden;color:#000;padding-left:1px;letter-spacing:0.38px">1000384</div>
<div class="t" style="left:259px;top:60px;width:43px;height:19px;line-height:21px;overflow:hidden;color:#000;padding-left:1px;letter-spacing:0.38px"></div>
<div class="t" style="left:303px;top:60px;width:41px;height:19px;line-height:21px;overflow:hidden;color:#000;padding-left:1px;letter-spacing:0.38px"></div>
<div class="t" style="left:345px;top:60px;width:49px;height:19px;line-height:21px;overflow:hidden;color:#000;padding-left:1px;letter-spacing:0.38px"></div>
<div class="t" style="left:395px;top:60px;width:51px;height:19px;line-height:21px;overflow:hidden;color:#000;text-align:right;padding-right:1px;letter-spacing:0.38px">2</div>
<div class="t" style="left:447px;top:60px;width:46px;height:19px;line-height:21px;overflow:hidden;color:#000;text-align:right;padding-right:1px;letter-spacing:0.38px">3</div>
<div class="t" style="left:494px;top:60px;width:58px;height:19px;line-height:21px;overflow:hidden;color:#000;text-align:right;padding-right:1px;letter-spacing:0.38px">330</div>
<div class="t" style="left:553px;top:60px;width:58px;height:19px;line-height:21px;overflow:hidden;color:#000;text-align:right;padding-right:1px;letter-spacing:0.38px">435</div>
<div class="t" style="left:612px;top:60px;width:64px;height:19px;line-height:21px;overflow:hidden;color:#000;text-align:right;padding-right:1px;letter-spacing:0.38px">330</div>
<div class="t" style="left:677px;top:60px;width:62px;height:19px;line-height:21px;overflow:hidden;color:#000;padding-left:5px;letter-spacing:0.38px">ООО "Автомир"</div>
<div class="t" style="left:740px;top:60px;width:97px;height:19px;line-height:21px;overflow:hidden;color:#000;padding-left:1px;letter-spacing:0.38px">Ортат</div>
<div class="abs" style="left:0;top:99px;width:838px;height:1px;background:#c8c8c8"></div>
<div class="t" style="left:0px;top:80px;width:16px;height:19px;line-height:21px;overflow:hidden;background:#ff00ff;color:#fff;text-align:center;letter-spacing:0.38px">м</div>
<div class="t" style="left:17px;top:80px;width:93px;height:19px;line-height:21px;overflow:hidden;color:#000;text-align:center;letter-spacing:0.38px">200100015259</div>
<div class="t" style="left:111px;top:80px;width:81px;height:19px;line-height:21px;overflow:hidden;color:#000;text-align:center;letter-spacing:0.38px">29.11.2019</div>
<div class="t" style="left:193px;top:80px;width:65px;height:19px;line-height:21px;overflow:hidden;color:#000;padding-left:1px;letter-spacing:0.38px">1000380</div>
<div class="t" style="left:259px;top:80px;width:43px;height:19px;line-height:21px;overflow:hidden;color:#000;padding-left:1px;letter-spacing:0.38px"></div>
<div class="t" style="left:303px;top:80px;width:41px;height:19px;line-height:21px;overflow:hidden;color:#000;padding-left:1px;letter-spacing:0.38px"></div>
<div class="t" style="left:345px;top:80px;width:49px;height:19px;line-height:21px;overflow:hidden;color:#000;padding-left:1px;letter-spacing:0.38px"></div>
<div class="t" style="left:395px;top:80px;width:51px;height:19px;line-height:21px;overflow:hidden;color:#000;text-align:right;padding-right:1px;letter-spacing:0.38px">3</div>
<div class="t" style="left:447px;top:80px;width:46px;height:19px;line-height:21px;overflow:hidden;color:#000;text-align:right;padding-right:1px;letter-spacing:0.38px"></div>
<div class="t" style="left:494px;top:80px;width:58px;height:19px;line-height:21px;overflow:hidden;color:#000;text-align:right;padding-right:1px;letter-spacing:0.38px">310</div>
<div class="t" style="left:553px;top:80px;width:58px;height:19px;line-height:21px;overflow:hidden;color:#000;text-align:right;padding-right:1px;letter-spacing:0.38px">409</div>
<div class="t" style="left:612px;top:80px;width:64px;height:19px;line-height:21px;overflow:hidden;color:#000;text-align:right;padding-right:1px;letter-spacing:0.38px">310</div>
<div class="t" style="left:677px;top:80px;width:62px;height:19px;line-height:21px;overflow:hidden;color:#000;padding-left:5px;letter-spacing:0.38px">ООО "Автомир"</div>
<div class="t" style="left:740px;top:80px;width:97px;height:19px;line-height:21px;overflow:hidden;color:#000;padding-left:1px;letter-spacing:0.38px">Ортат</div>
<div class="abs" style="left:0;top:119px;width:838px;height:1px;background:#c8c8c8"></div>
<div class="t" style="left:0px;top:100px;width:16px;height:19px;line-height:21px;overflow:hidden;background:#000;color:#fff;text-align:center;letter-spacing:0.38px">б</div>
<div class="t" style="left:17px;top:100px;width:93px;height:19px;line-height:21px;overflow:hidden;color:#000;text-align:center;letter-spacing:0.38px">200100015925</div>
<div class="t" style="left:111px;top:100px;width:81px;height:19px;line-height:21px;overflow:hidden;background:#c0c0c0;color:#000;text-align:center;letter-spacing:0.38px">23.04.2020</div>
<div class="t" style="left:193px;top:100px;width:65px;height:19px;line-height:21px;overflow:hidden;color:#000;padding-left:1px;letter-spacing:0.38px">1000108</div>
<div class="t" style="left:259px;top:100px;width:43px;height:19px;line-height:21px;overflow:hidden;color:#000;padding-left:1px;letter-spacing:0.38px"></div>
<div class="t" style="left:303px;top:100px;width:41px;height:19px;line-height:21px;overflow:hidden;color:#000;padding-left:1px;letter-spacing:0.38px"></div>
<div class="t" style="left:345px;top:100px;width:49px;height:19px;line-height:21px;overflow:hidden;color:#000;padding-left:1px;letter-spacing:0.38px"></div>
<div class="t" style="left:395px;top:100px;width:51px;height:19px;line-height:21px;overflow:hidden;color:#000;text-align:right;padding-right:1px;letter-spacing:0.38px">1</div>
<div class="t" style="left:447px;top:100px;width:46px;height:19px;line-height:21px;overflow:hidden;color:#000;text-align:right;padding-right:1px;letter-spacing:0.38px"></div>
<div class="t" style="left:494px;top:100px;width:58px;height:19px;line-height:21px;overflow:hidden;color:#000;text-align:right;padding-right:1px;letter-spacing:0.38px">350</div>
<div class="t" style="left:553px;top:100px;width:58px;height:19px;line-height:21px;overflow:hidden;color:#000;text-align:right;padding-right:1px;letter-spacing:0.38px">462</div>
<div class="t" style="left:612px;top:100px;width:64px;height:19px;line-height:21px;overflow:hidden;color:#000;text-align:right;padding-right:1px;letter-spacing:0.38px">350</div>
<div class="t" style="left:677px;top:100px;width:62px;height:19px;line-height:21px;overflow:hidden;color:#000;padding-left:5px;letter-spacing:0.38px">ООО "Автомир"</div>
<div class="t" style="left:740px;top:100px;width:97px;height:19px;line-height:21px;overflow:hidden;color:#000;padding-left:1px;letter-spacing:0.38px">Ортат</div>
<div class="abs" style="left:0;top:139px;width:838px;height:1px;background:#c8c8c8"></div>
<div class="t" style="left:0px;top:120px;width:16px;height:19px;line-height:21px;overflow:hidden;background:#000;color:#fff;text-align:center;letter-spacing:0.38px">б</div>
<div class="t" style="left:17px;top:120px;width:93px;height:19px;line-height:21px;overflow:hidden;color:#000;text-align:center;letter-spacing:0.38px">200100015924</div>
<div class="t" style="left:111px;top:120px;width:81px;height:19px;line-height:21px;overflow:hidden;background:#c0c0c0;color:#000;text-align:center;letter-spacing:0.38px">23.04.2020</div>
<div class="t" style="left:193px;top:120px;width:65px;height:19px;line-height:21px;overflow:hidden;color:#000;padding-left:1px;letter-spacing:0.38px">1000105</div>
<div class="t" style="left:259px;top:120px;width:43px;height:19px;line-height:21px;overflow:hidden;color:#000;padding-left:1px;letter-spacing:0.38px"></div>
<div class="t" style="left:303px;top:120px;width:41px;height:19px;line-height:21px;overflow:hidden;color:#000;padding-left:1px;letter-spacing:0.38px"></div>
<div class="t" style="left:345px;top:120px;width:49px;height:19px;line-height:21px;overflow:hidden;color:#000;padding-left:1px;letter-spacing:0.38px"></div>
<div class="t" style="left:395px;top:120px;width:51px;height:19px;line-height:21px;overflow:hidden;color:#000;text-align:right;padding-right:1px;letter-spacing:0.38px">1</div>
<div class="t" style="left:447px;top:120px;width:46px;height:19px;line-height:21px;overflow:hidden;color:#000;text-align:right;padding-right:1px;letter-spacing:0.38px"></div>
<div class="t" style="left:494px;top:120px;width:58px;height:19px;line-height:21px;overflow:hidden;color:#000;text-align:right;padding-right:1px;letter-spacing:0.38px">350</div>
<div class="t" style="left:553px;top:120px;width:58px;height:19px;line-height:21px;overflow:hidden;color:#000;text-align:right;padding-right:1px;letter-spacing:0.38px">462</div>
<div class="t" style="left:612px;top:120px;width:64px;height:19px;line-height:21px;overflow:hidden;color:#000;text-align:right;padding-right:1px;letter-spacing:0.38px">350</div>
<div class="t" style="left:677px;top:120px;width:62px;height:19px;line-height:21px;overflow:hidden;color:#000;padding-left:5px;letter-spacing:0.38px">ООО "Автомир"</div>
<div class="t" style="left:740px;top:120px;width:97px;height:19px;line-height:21px;overflow:hidden;color:#000;padding-left:1px;letter-spacing:0.38px">Ортат</div>
<div class="abs" style="left:16px;top:20px;width:1px;height:120px;background:#c8c8c8"></div>
<div class="abs" style="left:110px;top:20px;width:1px;height:120px;background:#c8c8c8"></div>
<div class="abs" style="left:192px;top:20px;width:1px;height:120px;background:#c8c8c8"></div>
<div class="abs" style="left:258px;top:20px;width:1px;height:120px;background:#c8c8c8"></div>
<div class="abs" style="left:302px;top:20px;width:1px;height:120px;background:#c8c8c8"></div>
<div class="abs" style="left:344px;top:20px;width:1px;height:120px;background:#c8c8c8"></div>
<div class="abs" style="left:394px;top:20px;width:1px;height:120px;background:#c8c8c8"></div>
<div class="abs" style="left:446px;top:20px;width:1px;height:120px;background:#c8c8c8"></div>
<div class="abs" style="left:493px;top:20px;width:1px;height:120px;background:#c8c8c8"></div>
<div class="abs" style="left:552px;top:20px;width:1px;height:120px;background:#c8c8c8"></div>
<div class="abs" style="left:611px;top:20px;width:1px;height:120px;background:#c8c8c8"></div>
<div class="abs" style="left:676px;top:20px;width:1px;height:120px;background:#c8c8c8"></div>
<div class="abs" style="left:739px;top:20px;width:1px;height:120px;background:#c8c8c8"></div>
<div class="abs" style="left:837px;top:20px;width:1px;height:120px;background:#c8c8c8"></div>
<div class="abs" style="left:0;top:20px;width:838px;height:19px;border:1px dotted #f0a040"></div>
<div class="abs" style="left:0;top:140px;width:838px;height:17px;background:#f0f0f0"></div>
<div class="abs" style="left:17px;top:140px;width:17px;height:17px;background:#cdcdcd"></div>
<svg class="abs" style="left:4px;top:143px" width="8" height="9"><path d="M6 1 L2.5 4.5 L6 8" stroke="#505050" stroke-width="2" fill="none"/></svg>
<svg class="abs" style="left:826px;top:143px" width="8" height="9"><path d="M1.5 1 L5 4.5 L1.5 8" stroke="#505050" stroke-width="2" fill="none"/></svg>
</div>
<div class="abs" style="left:3px;top:522px;width:841px;height:34px;border:1px solid #fff"></div>
<div class="abs" style="left:2px;top:521px;width:841px;height:34px;border:1px solid #a0a0a0"></div>
<div class="btn" style="left:31px;top:526px;width:125px;height:26px"></div>
<div class="t b" style="left:31px;top:534px;width:125px;text-align:center;letter-spacing:0.4px">Выбор [Ent]</div>
<div class="btn" style="left:185px;top:526px;width:135px;height:26px"></div>
<div class="t b" style="left:185px;top:534px;width:135px;text-align:center;letter-spacing:0.4px">Этикетки [F5]</div>
<div class="btn" style="left:349px;top:526px;width:145px;height:26px"></div>
<div class="t b" style="left:349px;top:534px;width:145px;text-align:center;letter-spacing:0.4px">Сертификат [F8]</div>
<div class="btn" style="left:523px;top:526px;width:135px;height:26px"></div>
<div class="t b" style="left:523px;top:534px;width:135px;text-align:center;letter-spacing:0.4px">Реквизиты [F9]</div>
<div class="btn" style="left:687px;top:526px;width:125px;height:26px"></div>
<div class="t b" style="left:687px;top:534px;width:125px;text-align:center;letter-spacing:0.4px">Возврат [Esc]</div>
<div class="abs" style="left:1px;top:557px;width:845px;height:10px;border:1px solid #fff"></div>
<div class="abs" style="left:0px;top:556px;width:845px;height:10px;border:1px solid #a0a0a0"></div>
<div class="abs" style="left:1px;top:568px;width:250px;height:16px;border-top:1px solid #a0a0a0;border-left:1px solid #a0a0a0;border-right:1px solid #fff;border-bottom:1px solid #fff"></div>
<div class="abs" style="left:253px;top:568px;width:592px;height:16px;border-top:1px solid #a0a0a0;border-left:1px solid #a0a0a0;border-bottom:1px solid #fff"></div>
<div class="abs" style="left:0;top:584px;width:846px;height:1px;background:#aaa"></div>
<div class="t b" style="left:6px;top:570px;font-size:13px;letter-spacing:0.75px">200100015254 (460704424748)</div>
<svg class="abs" style="left:832px;top:571px" width="13" height="13" viewBox="0 0 13 13"><path d="M12 1.5 L1.5 12 M12 5.5 L5.5 12 M12 9.5 L9.5 12" stroke="#fff" stroke-width="1.2" transform="translate(-1,-1)"/><path d="M12 1.5 L1.5 12 M12 5.5 L5.5 12 M12 9.5 L9.5 12" stroke="#a0a0a0" stroke-width="1.6"/></svg>
</body></html>
